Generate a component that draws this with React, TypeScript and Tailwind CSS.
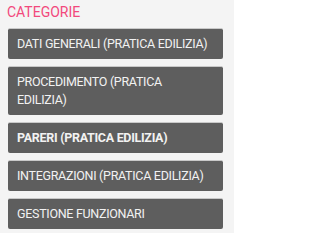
import React from 'react';

const items = [
  { lines: ['DATI GENERALI (PRATICA EDILIZIA)'], bold: false },
  { lines: ['PROCEDIMENTO (PRATICA', 'EDILIZIA)'], bold: false },
  { lines: ['PARERI (PRATICA EDILIZIA)'], bold: true },
  { lines: ['INTEGRAZIONI (PRATICA EDILIZIA)'], bold: false },
  { lines: ['GESTIONE FUNZIONARI'], bold: false },
];

const App: React.FC = () => {
  return (
    <div className="w-[234px] h-[233px] bg-[#f4f4f4] pl-[7px] pt-[3px] font-['Roboto',sans-serif]">
      <h2 className="text-[14px] leading-[18px] text-[#f2487c] uppercase">Categorie</h2>
      <ul className="mt-[7px] ml-[1px] w-[215px] flex flex-col gap-[7px]">
        {items.map(item => (
          <li
            key={item.lines[0]}
            className={`bg-[#5e5e5e] border-t border-[#c9c9c9] rounded-[2px] pl-[9px] pr-[4px] pt-[6px] pb-[6px] text-[12.5px] tracking-[-0.3px] leading-[18px] text-[#f2f2f2] whitespace-nowrap ${item.bold ? 'font-bold' : ''}`}
          >
            {item.lines.map(line => (
              <div key={line}>{line}</div>
            ))}
          </li>
        ))}
      </ul>
    </div>
  );
};

export default App;
